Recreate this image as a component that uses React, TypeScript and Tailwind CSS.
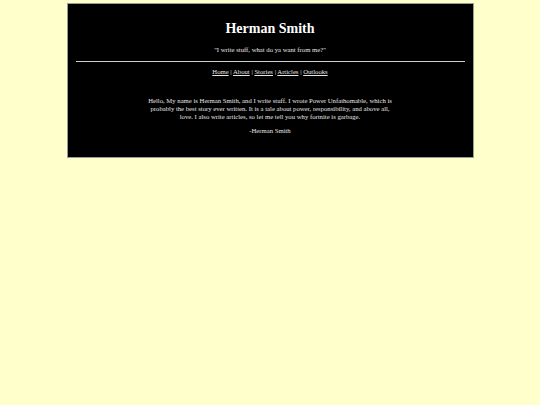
import React from 'react';

const links = ['Home', 'About', 'Stories', 'Articles', 'Outlooks'];

const App: React.FC = () => {
  return (
    <div className="min-h-[405px] w-full bg-[#ffffcc] pt-[3px] font-['Liberation_Serif',serif]">
      <div className="mx-auto w-[407px] border border-[#9a9a9a] bg-black pb-[22px] text-center text-[#e6e6e6]">
        <h1 className="pt-[16px] text-[14px] font-bold leading-[17px] text-white">Herman Smith</h1>
        <p className="mt-[9px] text-[6.7px] leading-[8px]">"I write stuff, what do ya want from me?"</p>
        <hr className="mx-[8px] mt-[7px] border-t border-[#cfcfcf]" />
        <nav className="mt-[6px] text-[6.7px] leading-[8px]">
          {links.map((l, i) => (
            <span key={l}>
              {i > 0 && ' | '}
              <a href="#" className="underline">{l}</a>
            </span>
          ))}
        </nav>
        <p className="mx-auto mt-[21px] w-[250px] text-[6.7px] leading-[8px]">
          Hello, My name is Herman Smith, and I write stuff. I wrote Power Unfathomable, which is probably the best story ever written. It is a tale about power, responsibility, and above all, love. I also write articles, so let me tell you why fortnite is garbage.
        </p>
        <p className="mt-[6px] text-[6.7px] leading-[8px]">-Herman Smith</p>
      </div>
    </div>
  );
};

export default App;
